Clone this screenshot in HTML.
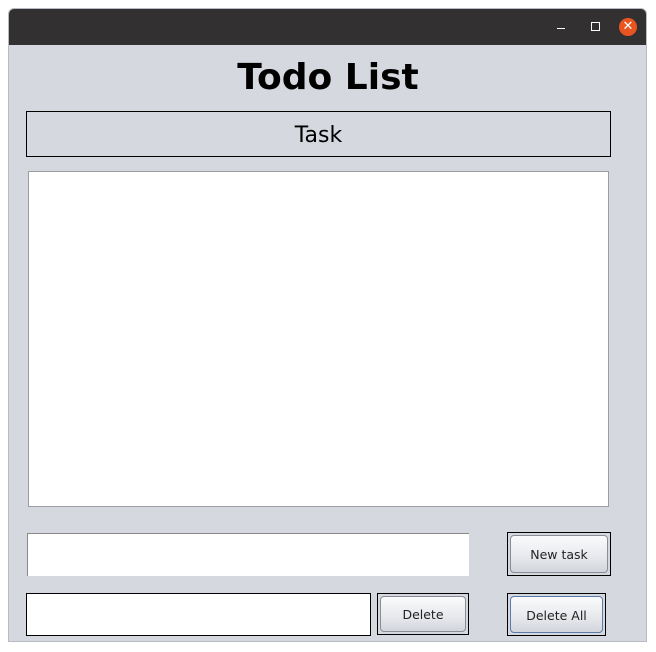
<!DOCTYPE html>
<html><head><style>
body{margin:0;width:656px;height:652px;background:#fff;position:relative;overflow:hidden;font-family:"DejaVu Sans","Liberation Sans",sans-serif}
.win{position:absolute;left:8px;top:8px;width:639px;height:634px;background:#d5d8df;border:1px solid #b8bbc2;box-sizing:border-box;border-radius:6px 6px 0 0;overflow:hidden}
.tb{position:absolute;left:0;top:0;width:100%;height:36px;background:#323031}
.a{position:absolute}
.btn{position:absolute;border:1px solid #000;box-sizing:border-box}
.btn div{position:absolute;left:2px;top:2px;right:2px;bottom:2px;border:1px solid #8a8d93;border-radius:4px;background:linear-gradient(#fbfbfc,#e6e8ec 60%,#d2d5db);font-size:12.5px;display:flex;align-items:center;justify-content:center;color:#222;padding-top:1px;box-sizing:border-box}
</style></head><body>
<div class="win"><div class="tb">
<div class="a" style="left:548px;top:19px;width:8px;height:1px;background:#fff"></div>
<div class="a" style="left:582px;top:13px;width:7px;height:7px;border:1px solid #fff"></div>
<div class="a" style="left:610px;top:9px;width:18px;height:18px;border-radius:50%;background:#e95420;color:#fff;font-size:13px;line-height:18px;text-align:center">✕</div>
</div></div>
<div class="a" style="left:0;width:656px;top:56px;text-align:center;font-weight:bold;font-size:36px;line-height:44px">Todo List</div>
<div class="a" style="left:26px;top:111px;width:585px;height:46px;border:1px solid #000;box-sizing:border-box;text-align:center;font-size:22px;line-height:48px">Task</div>
<div class="a" style="left:28px;top:171px;width:581px;height:336px;background:#fff;border:1px solid #9a9da4;box-sizing:border-box"></div>
<div class="a" style="left:27px;top:533px;width:442px;height:43px;background:#fff;border-top:1px solid #888;border-left:1px solid #888;box-sizing:border-box"></div>
<div class="btn" style="left:507px;top:532px;width:104px;height:44px"><div>New task</div></div>
<div class="a" style="left:26px;top:593px;width:345px;height:43px;background:#fff;border:1px solid #000;box-sizing:border-box"></div>
<div class="btn" style="left:377px;top:593px;width:92px;height:42px"><div>Delete</div></div>
<div class="btn" style="left:507px;top:593px;width:99px;height:43px"><div style="border-color:#5a7ca8">Delete All</div></div>
</body></html>
